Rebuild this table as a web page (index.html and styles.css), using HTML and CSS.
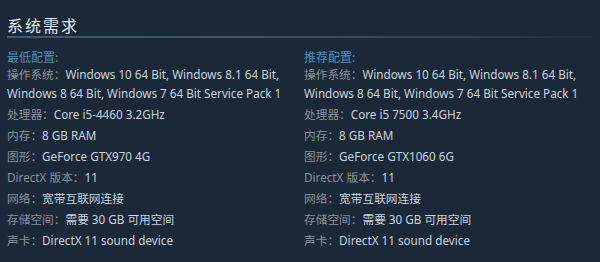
FILE: index.html
```html
<!DOCTYPE html>
<html lang="zh-CN">
<head>
<meta charset="utf-8">
<link rel="stylesheet" href="styles.css">
</head>
<body>
<div class="page">
  <h2 class="title">系统需求</h2>
  <div class="cols">
    <div class="col">
      <div class="head">最低配置:</div>
      <ul class="reqs">
        <li><span class="lbl">操作系统：</span>Windows 10 64 Bit, Windows 8.1 64 Bit, Windows 8 64 Bit, Windows 7 64 Bit Service Pack 1</li>
        <li><span class="lbl">处理器：</span>Core i5-4460 3.2GHz</li>
        <li><span class="lbl">内存：</span>8 GB RAM</li>
        <li><span class="lbl">图形：</span>GeForce GTX970 4G</li>
        <li><span class="lbl">DirectX 版本：</span>11</li>
        <li><span class="lbl">网络：</span>宽带互联网连接</li>
        <li><span class="lbl">存储空间：</span>需要 30 GB 可用空间</li>
        <li><span class="lbl">声卡：</span>DirectX 11 sound device</li>
      </ul>
    </div>
    <div class="col">
      <div class="head">推荐配置:</div>
      <ul class="reqs">
        <li><span class="lbl">操作系统：</span>Windows 10 64 Bit, Windows 8.1 64 Bit, Windows 8 64 Bit, Windows 7 64 Bit Service Pack 1</li>
        <li><span class="lbl">处理器：</span>Core i5 7500 3.4GHz</li>
        <li><span class="lbl">内存：</span>8 GB RAM</li>
        <li><span class="lbl">图形：</span>GeForce GTX1060 6G</li>
        <li><span class="lbl">DirectX 版本：</span>11</li>
        <li><span class="lbl">网络：</span>宽带互联网连接</li>
        <li><span class="lbl">存储空间：</span>需要 30 GB 可用空间</li>
        <li><span class="lbl">声卡：</span>DirectX 11 sound device</li>
      </ul>
    </div>
  </div>
</div>
</body>
</html>
```
FILE: styles.css
```css
html, body {
  margin: 0;
  padding: 0;
  background: #1b2838;
}
body {
  width: 600px;
  height: 262px;
  overflow: hidden;
  font-family: "Noto Sans", "Noto Sans CJK SC", sans-serif;
}
.page {
  padding: 14px 7px 0 7px;
}
.title {
  margin: 0;
  font-size: 16px;
  font-weight: normal;
  letter-spacing: 2px;
  color: #e4e8ec;
  line-height: 22px;
  padding-bottom: 1px;
  font-family: "Noto Sans CJK SC", sans-serif;
}
.title::after {
  content: "";
  display: block;
  height: 2px;
  margin-top: 0;
  background: linear-gradient(to right, #3a5a72 0%, #3a566b 40%, #2e4457 75%, #1f2e3e 100%);
}
.cols {
  display: grid;
  grid-template-columns: 1fr 1fr;
  column-gap: 8px;
  margin-top: 10px;
}
.head {
  font-size: 12px;
  line-height: 16px;
  color: #4b8fbf;
  font-family: "Noto Sans CJK SC", sans-serif;
}
.reqs {
  list-style: none;
  margin: 0;
  padding: 0;
}
.reqs li {
  font-size: 11.7px;
  line-height: 19px;
  margin-bottom: 2px;
  color: #c9d3dc;
}
.lbl {
  color: #87919a;
}
```
